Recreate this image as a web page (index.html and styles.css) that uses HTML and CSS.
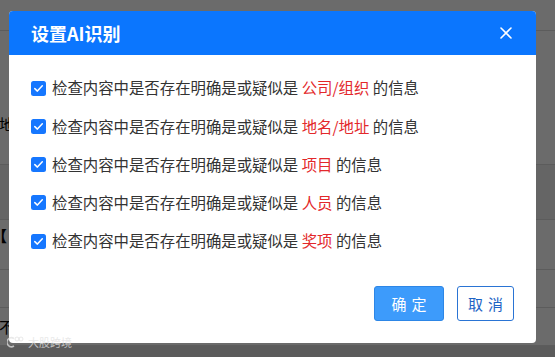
FILE: index.html
```html
<!DOCTYPE html>
<html lang="zh-CN">
<head>
<meta charset="utf-8">
<title>设置AI识别</title>
<link rel="stylesheet" href="styles.css">
</head>
<body>
<div class="page">
  <div class="bar"></div>
  <div class="row r1"><span class="cell">地</span></div>
  <div class="row r2"></div>
  <div class="row r3"><span class="cell cell-bracket">【</span></div>
  <div class="row r4"></div>
  <div class="row r5"><span class="cell">不</span></div>
  <div class="row r6"></div>
</div>
<div class="mask"></div>
<div class="dialog">
  <div class="dialog-header">
    <span class="dialog-title">设置AI识别</span>
    <svg class="close" width="12" height="12" viewBox="0 0 12 12"><path d="M1 1L11 11M11 1L1 11" stroke="#fff" stroke-width="1.6" fill="none" stroke-linecap="round"/></svg>
  </div>
  <div class="dialog-body">
    <label class="opt"><svg class="cb" width="15" height="15" viewBox="0 0 15 15"><rect x="0" y="0" width="15" height="15" rx="2.5" fill="#1677ff"/><path d="M3.8 7.6L6.4 10.1L11.3 4.8" stroke="#fff" stroke-width="1.5" fill="none" stroke-linecap="round" stroke-linejoin="round"/></svg><span class="txt">检查内容中是否存在明确是或疑似是 <em>公司/组织</em> 的信息</span></label>
    <label class="opt"><svg class="cb" width="15" height="15" viewBox="0 0 15 15"><rect x="0" y="0" width="15" height="15" rx="2.5" fill="#1677ff"/><path d="M3.8 7.6L6.4 10.1L11.3 4.8" stroke="#fff" stroke-width="1.5" fill="none" stroke-linecap="round" stroke-linejoin="round"/></svg><span class="txt">检查内容中是否存在明确是或疑似是 <em>地名/地址</em> 的信息</span></label>
    <label class="opt"><svg class="cb" width="15" height="15" viewBox="0 0 15 15"><rect x="0" y="0" width="15" height="15" rx="2.5" fill="#1677ff"/><path d="M3.8 7.6L6.4 10.1L11.3 4.8" stroke="#fff" stroke-width="1.5" fill="none" stroke-linecap="round" stroke-linejoin="round"/></svg><span class="txt">检查内容中是否存在明确是或疑似是 <em>项目</em> 的信息</span></label>
    <label class="opt"><svg class="cb" width="15" height="15" viewBox="0 0 15 15"><rect x="0" y="0" width="15" height="15" rx="2.5" fill="#1677ff"/><path d="M3.8 7.6L6.4 10.1L11.3 4.8" stroke="#fff" stroke-width="1.5" fill="none" stroke-linecap="round" stroke-linejoin="round"/></svg><span class="txt">检查内容中是否存在明确是或疑似是 <em>人员</em> 的信息</span></label>
    <label class="opt"><svg class="cb" width="15" height="15" viewBox="0 0 15 15"><rect x="0" y="0" width="15" height="15" rx="2.5" fill="#1677ff"/><path d="M3.8 7.6L6.4 10.1L11.3 4.8" stroke="#fff" stroke-width="1.5" fill="none" stroke-linecap="round" stroke-linejoin="round"/></svg><span class="txt">检查内容中是否存在明确是或疑似是 <em>奖项</em> 的信息</span></label>
  </div>
  <div class="dialog-footer">
    <button class="btn btn-primary">确定</button>
    <button class="btn btn-plain">取消</button>
  </div>
</div>
<div class="watermark">
  <svg width="18" height="12" viewBox="0 0 18 12"><path d="M7 2.5A4.5 4.5 0 1 0 7 10" stroke="currentColor" stroke-width="1.6" fill="none"/><circle cx="10" cy="3" r="2" stroke="currentColor" stroke-width="1" fill="none"/><circle cx="14" cy="3" r="2" stroke="currentColor" stroke-width="1" fill="none"/></svg>
  <span>大股跨境</span>
</div>
</body>
</html>
```
FILE: styles.css
```css
* { box-sizing: border-box; }
html, body { margin: 0; padding: 0; }
body {
  width: 555px;
  height: 357px;
  overflow: hidden;
  position: relative;
  font-family: "Noto Sans CJK SC", "Noto Sans", sans-serif;
  background: #fff;
}
.page {
  display: flex;
  flex-direction: column;
  height: 357px;
}
.bar { height: 31px; border-bottom: 1px solid #dcdcdc; flex: none; }
.row {
  flex: none;
  border-bottom: 1px solid #dcdcdc;
  display: flex;
  align-items: center;
  font-size: 15px;
  line-height: 18px;
  color: #000;
}
.cell { margin-left: -1px; }
.cell-bracket { margin-left: -8px; font-weight: 700; }
.r1 { height: 134px; align-items: flex-start; padding-top: 84px; }
.r2 { height: 55px; background: #f1f1f1; }
.r3 { height: 50px; align-items: flex-start; padding-top: 7px; }
.r4 { height: 38px; }
.r5 { height: 38px; }
.r6 { flex: 1; background: #d9d9d9; border-bottom: none; }
.mask {
  position: absolute;
  inset: 0;
  background: rgba(0, 0, 0, 0.58);
}
.dialog {
  position: absolute;
  left: 9px;
  top: 11px;
  width: 527px;
  height: 332px;
  background: #fff;
  border-radius: 4px;
  overflow: hidden;
  display: flex;
  flex-direction: column;
}
.dialog-header {
  height: 44px;
  flex: none;
  background: #0b76fe;
  display: flex;
  align-items: center;
  justify-content: space-between;
  padding: 0 24px 0 22px;
}
.dialog-title {
  color: #fff;
  font-size: 18px;
  font-weight: 700;
  line-height: 1;
}
.close { display: block; }
.dialog-body {
  padding: 14px 0 0 22px;
  display: flex;
  flex-direction: column;
}
.opt {
  height: 38.25px;
  display: flex;
  align-items: center;
  gap: 6px;
}
.cb { flex: none; display: block; }
.txt {
  font-size: 15.4px;
  color: #333;
  line-height: 1;
  white-space: nowrap;
}
.txt em {
  font-style: normal;
  color: #e3282b;
}
.dialog-footer {
  margin-top: 26px;
  display: flex;
  justify-content: flex-end;
  gap: 13px;
  padding-right: 22px;
}
.btn {
  height: 35px;
  border-radius: 3px;
  font-family: "Noto Sans CJK SC", sans-serif;
  font-size: 15px;
  letter-spacing: 5px;
  padding: 0 0 0 5px;
  cursor: pointer;
}
.btn-primary {
  width: 70px;
  background: #3d9bfb;
  border: 1px solid #2d86e6;
  color: #fff;
}
.btn-plain {
  width: 57px;
  background: #fff;
  border: 1px solid #2a74d4;
  color: #1e63c4;
}
.watermark {
  position: absolute;
  left: 7px;
  top: 336px;
  display: flex;
  align-items: center;
  gap: 3px;
  color: rgba(225, 225, 225, 0.75);
  font-size: 11px;
  line-height: 12px;
}
.watermark svg { display: block; }
```
